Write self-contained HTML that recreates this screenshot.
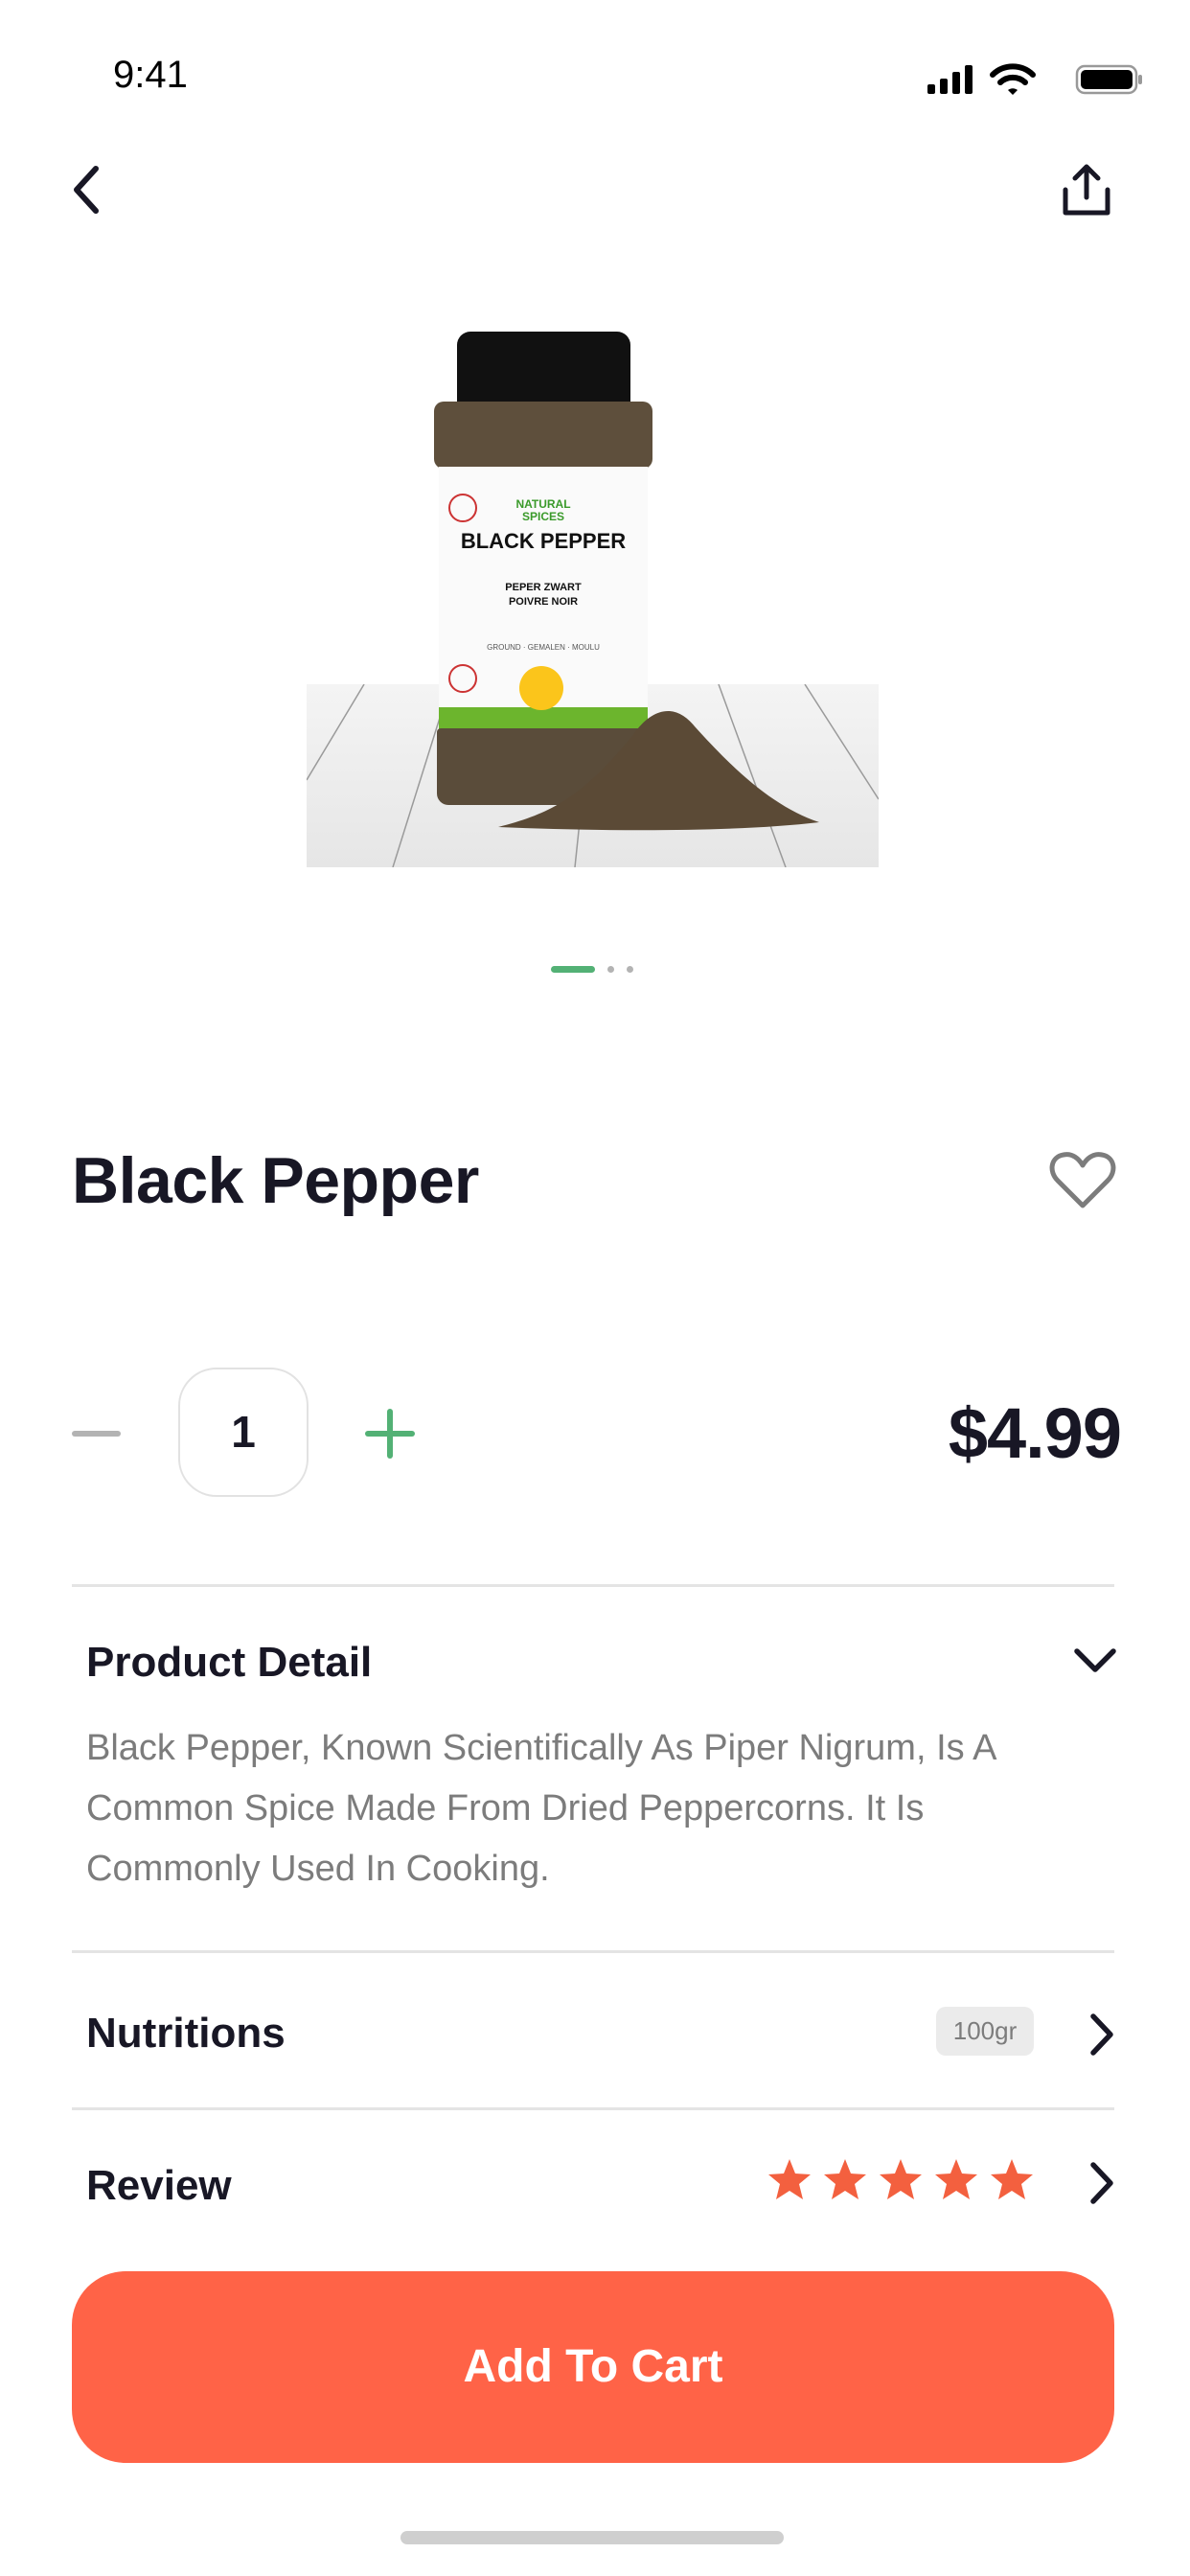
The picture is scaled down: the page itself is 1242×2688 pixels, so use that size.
<!DOCTYPE html>
<html><head><meta charset="utf-8">
<style>
*{margin:0;padding:0;box-sizing:border-box}
body{width:1242px;height:2688px;background:#fff;position:relative;overflow:hidden;font-family:"Liberation Sans",Arial,sans-serif;color:#181725}
.a{position:absolute}
.div{position:absolute;left:75px;width:1088px;height:3px;background:#e4e4e4}
</style></head><body>
<div class="a" style="left:118px;top:56px;font-size:40px;color:#000">9:41</div>
<svg class="a" style="left:966px;top:64px" width="230" height="40" viewBox="0 0 230 40">
<rect x="2" y="24" width="8" height="10" rx="2" fill="#000"/>
<rect x="15" y="18" width="8" height="16" rx="2" fill="#000"/>
<rect x="28" y="11" width="8" height="23" rx="2" fill="#000"/>
<rect x="41" y="4" width="8" height="30" rx="2" fill="#000"/>
<path d="M70 14 a30 30 0 0 1 42 0" stroke="#000" stroke-width="6" fill="none" stroke-linecap="round"/>
<path d="M78 22 a19 19 0 0 1 26 0" stroke="#000" stroke-width="6" fill="none" stroke-linecap="round"/>
<path d="M86 30 l5 5 l5 -5 a8 8 0 0 0 -10 0z" fill="#000"/>
<rect x="158" y="5" width="62" height="28" rx="8" stroke="#999" stroke-width="2.5" fill="none"/>
<rect x="162" y="9" width="54" height="20" rx="5" fill="#000"/>
<rect x="222" y="14" width="4" height="10" rx="2" fill="#999"/>
</svg>
<svg class="a" style="left:70px;top:170px" width="40" height="56" viewBox="0 0 40 56"><path d="M30 6 L10 28 L30 50" stroke="#181725" stroke-width="6" fill="none" stroke-linecap="round" stroke-linejoin="round"/></svg>
<svg class="a" style="left:1106px;top:170px" width="56" height="58" viewBox="0 0 56 58"><path d="M28 36 V5 M16 16 L28 4 L40 16" stroke="#181725" stroke-width="5" fill="none" stroke-linecap="round" stroke-linejoin="round"/><path d="M6 28 V52 H50 V28" stroke="#181725" stroke-width="5" fill="none" stroke-linecap="round" stroke-linejoin="round"/></svg>
<div class="a" style="left:320px;top:714px;width:597px;height:191px;background:linear-gradient(180deg,#f4f4f4,#e6e6e6);overflow:hidden">
<svg width="597" height="191"><g stroke="#9a9a9a" stroke-width="1.5"><line x1="60" y1="0" x2="0" y2="100"/><line x1="150" y1="0" x2="90" y2="191"/><line x1="300" y1="0" x2="280" y2="191"/><line x1="430" y1="0" x2="500" y2="191"/><line x1="520" y1="0" x2="597" y2="120"/></g></svg></div>
<div class="a" style="left:477px;top:346px;width:181px;height:78px;background:#111;border-radius:14px 14px 4px 4px"></div>
<div class="a" style="left:453px;top:419px;width:228px;height:70px;background:#5e4f3c;border-radius:10px"></div>
<div class="a" style="left:458px;top:487px;width:218px;height:273px;background:#fafafa"></div>
<div class="a" style="left:458px;top:738px;width:218px;height:24px;background:#6cb52d"></div>
<div class="a" style="left:456px;top:760px;width:222px;height:80px;background:#5a4c3a;border-radius:4px 4px 12px 12px"></div>
<div class="a" style="left:458px;top:520px;width:218px;text-align:center;font-size:12px;font-weight:700;color:#3a9a2a;line-height:13px">NATURAL<br>SPICES</div>
<div class="a" style="left:458px;top:552px;width:218px;text-align:center;font-size:22px;font-weight:700;color:#111">BLACK PEPPER</div>
<div class="a" style="left:458px;top:606px;width:218px;text-align:center;font-size:11px;font-weight:700;color:#111;line-height:15px">PEPER ZWART<br>POIVRE NOIR</div>
<div class="a" style="left:458px;top:671px;width:218px;text-align:center;font-size:8px;color:#555">GROUND · GEMALEN · MOULU</div>
<div class="a" style="left:542px;top:695px;width:46px;height:46px;border-radius:50%;background:#fbc51b"></div>
<div class="a" style="left:468px;top:515px;width:30px;height:30px;border-radius:50%;border:2px solid #c33"></div>
<div class="a" style="left:468px;top:693px;width:30px;height:30px;border-radius:50%;border:2px solid #c33"></div>
<svg class="a" style="left:520px;top:728px" width="340" height="140"><path d="M0 135 C60 120 90 100 140 40 C160 10 185 5 205 30 C250 80 290 115 335 130 C250 140 120 140 0 135Z" fill="#5b4a36"/></svg>
<div class="a" style="left:575px;top:1008px;width:46px;height:7px;border-radius:4px;background:#53b175"></div>
<div class="a" style="left:634px;top:1008px;width:7px;height:7px;border-radius:50%;background:#b3b3b3"></div>
<div class="a" style="left:654px;top:1008px;width:7px;height:7px;border-radius:50%;background:#b3b3b3"></div>
<div class="a" style="left:75px;top:1193px;font-size:68px;font-weight:700;letter-spacing:-0.5px">Black Pepper</div>
<svg class="a" style="left:1094px;top:1200px" width="72" height="64" viewBox="0 0 72 64"><path d="M36 58 L10 32 C0 22 3 7 16 5 C25 3 32 9 36 16 C40 9 47 3 56 5 C69 7 72 22 62 32 Z" stroke="#7c7c7c" stroke-width="5" fill="none" stroke-linejoin="round"/></svg>
<div class="a" style="left:75px;top:1493px;width:51px;height:6px;border-radius:3px;background:#b3b3b3"></div>
<div class="a" style="left:186px;top:1427px;width:136px;height:135px;border:2px solid #e2e2e2;border-radius:40px;text-align:center;line-height:131px;font-size:46px;font-weight:600">1</div>
<div class="a" style="left:381px;top:1493px;width:52px;height:6px;border-radius:3px;background:#53b175"></div>
<div class="a" style="left:404px;top:1470px;width:6px;height:52px;border-radius:3px;background:#53b175"></div>
<div class="a" style="right:72px;top:1453px;font-size:74px;font-weight:700;letter-spacing:-1px">$4.99</div>
<div class="div" style="top:1653px"></div>
<div class="a" style="left:90px;top:1710px;font-size:44px;font-weight:700">Product Detail</div>
<svg class="a" style="left:1120px;top:1718px" width="46" height="30" viewBox="0 0 46 30"><path d="M4 5 L23 24 L42 5" stroke="#181725" stroke-width="5.5" fill="none" stroke-linecap="round" stroke-linejoin="round"/></svg>
<div class="a" style="left:90px;top:1793px;width:1100px;font-size:38px;line-height:63px;color:#7c7c7c">Black Pepper, Known Scientifically As Piper Nigrum, Is A<br>Common Spice Made From Dried Peppercorns. It Is<br>Commonly Used In Cooking.</div>
<div class="div" style="top:2035px"></div>
<div class="a" style="left:90px;top:2097px;font-size:44px;font-weight:700">Nutritions</div>
<div class="a" style="left:977px;top:2094px;width:102px;height:51px;border-radius:10px;background:#ebebeb;text-align:center;line-height:51px;font-size:26px;color:#7c7c7c">100gr</div>
<svg class="a" style="left:1135px;top:2100px" width="30" height="46" viewBox="0 0 30 46"><path d="M6 4 L24 23 L6 42" stroke="#181725" stroke-width="5.5" fill="none" stroke-linecap="round" stroke-linejoin="round"/></svg>
<div class="div" style="top:2199px"></div>
<div class="a" style="left:90px;top:2256px;font-size:44px;font-weight:700">Review</div>
<svg class="a" style="left:800px;top:2252px" width="280" height="46" viewBox="0 0 280 46">
<defs><path id="s" d="M22 1 L28 16 L44 17 L32 27 L36 43 L22 34 L8 43 L12 27 L0 17 L16 16Z" fill="#f3603f"/></defs>
<use href="#s" x="2"/><use href="#s" x="60"/><use href="#s" x="118"/><use href="#s" x="176"/><use href="#s" x="234"/></svg>
<svg class="a" style="left:1135px;top:2255px" width="30" height="46" viewBox="0 0 30 46"><path d="M6 4 L24 23 L6 42" stroke="#181725" stroke-width="5.5" fill="none" stroke-linecap="round" stroke-linejoin="round"/></svg>
<div class="a" style="left:75px;top:2370px;width:1088px;height:200px;border-radius:56px;background:#ff6347;color:#fff;text-align:center;line-height:200px;font-size:48px;font-weight:600">Add To Cart</div>
<div class="a" style="left:418px;top:2641px;width:400px;height:14px;border-radius:7px;background:#cfcfcf"></div>
</body></html>
